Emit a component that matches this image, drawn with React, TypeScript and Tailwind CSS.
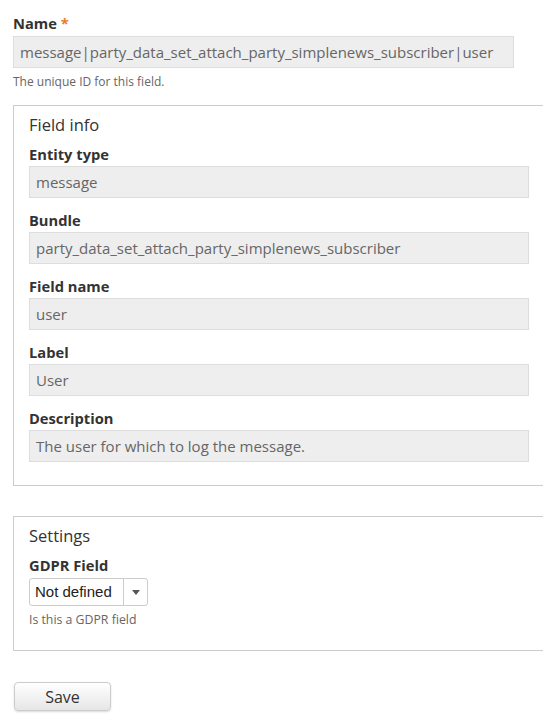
import React from "react";

const font = { fontFamily: '"Open Sans", "Noto Sans", sans-serif' };

const ReadonlyField = ({ label, value }: { label: string; value: string }) => (
  <div className="mb-[12px] last:mb-0">
    <div className="mb-[2px] h-[20px] text-[14.7px] font-bold leading-[20px] text-[#333]">{label}</div>
    <div className="h-[32px] w-[500px] border border-[#ddd] bg-[#eee] px-[6px] text-[15px] leading-[30px] text-[#666]">
      {value}
    </div>
  </div>
);

const fields = [
  { label: "Entity type", value: "message" },
  { label: "Bundle", value: "party_data_set_attach_party_simplenews_subscriber" },
  { label: "Field name", value: "user" },
  { label: "Label", value: "User" },
  { label: "Description", value: "The user for which to log the message." },
];

export default function App() {
  return (
    <div className="min-h-screen w-full overflow-hidden bg-white" style={font}>
      <div className="w-[560px] px-[13px] pt-[13px]">
        <div className="h-[20px] text-[14.7px] font-bold leading-[20px] text-[#333]">
          Name <span className="text-[#e87a2a]">*</span>
        </div>
        <div className="mt-[3px] h-[32px] w-[501px] border border-[#ddd] bg-[#eee] px-[6px] text-[15px] leading-[30px] text-[#666]">
          message|party_data_set_attach_party_simplenews_subscriber|user
        </div>
        <div className="mt-[5px] h-[18px] text-[12px] leading-[18px] text-[#666]">The unique ID for this field.</div>

        <div className="mt-[14px] w-[533px] border border-[#ccc] px-[15px] pb-[23px] pt-[8px]">
          <div className="mb-[8px] h-[22px] text-[16.5px] leading-[22px] text-[#333]">Field info</div>
          {fields.map((f) => (
            <ReadonlyField key={f.label} label={f.label} value={f.value} />
          ))}
        </div>

        <div className="mt-[30px] w-[533px] border border-[#ccc] px-[15px] pb-[21px] pt-[8px]">
          <div className="mb-[8px] h-[22px] text-[16.5px] leading-[22px] text-[#333]">Settings</div>
          <div className="mb-[3px] h-[20px] text-[14.7px] font-bold leading-[20px] text-[#333]">GDPR Field</div>
          <div
            className="flex h-[28px] w-[119px] items-stretch rounded-[3px] border border-[#ccc] bg-white text-[15px] text-[#222]"
            style={{ fontFamily: '"Liberation Sans", Arial, sans-serif' }}
          >
            <div className="flex-1 pl-[5px] leading-[26px]">Not defined</div>
            <div className="flex w-[24px] items-center justify-center border-l border-[#ccc]">
              <svg width="8" height="5" viewBox="0 0 8 5">
                <path d="M0 0h8L4 5z" fill="#555" />
              </svg>
            </div>
          </div>
          <div className="mt-[5px] h-[18px] text-[12.3px] leading-[18px] text-[#666]">Is this a GDPR field</div>
        </div>

        <button className="ml-[1px] mt-[31px] h-[29px] w-[97px] rounded-[4px] border border-[#ccc] bg-gradient-to-b from-white to-[#e6e6e6] text-[16px] text-[#333] shadow-[0_1px_2px_rgba(0,0,0,0.15)]">
          Save
        </button>
      </div>
    </div>
  );
}
